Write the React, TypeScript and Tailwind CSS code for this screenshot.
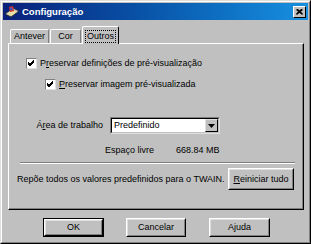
import React from "react";

const font = { fontFamily: '"Liberation Sans", Arial, sans-serif' };

function Check() {
  return (
    <div className="w-[11px] h-[11px] bg-white border border-t-[#808080] border-l-[#808080] border-r-[#dfdfdf] border-b-[#dfdfdf] shrink-0 flex items-center justify-center">
      <svg width="9" height="9" viewBox="0 0 9 9">
        <path d="M1 4 L3 6 L7 2 M1 5 L3 7 L7 3 M1 3 L3 5 L7 1" stroke="#000" strokeWidth="1" fill="none" />
      </svg>
    </div>
  );
}

function Btn({ children, className = "", def = false }: { children: React.ReactNode; className?: string; def?: boolean }) {
  return (
    <div className={`${def ? "border border-black" : ""} ${className}`}>
      <div className="w-full h-full bg-[#c0c0c0] border border-t-white border-l-white border-r-black border-b-black">
        <div className="w-full h-full border border-t-[#dfdfdf] border-l-[#dfdfdf] border-r-[#808080] border-b-[#808080] flex items-center justify-center text-[9px] text-black leading-none whitespace-nowrap">
          {children}
        </div>
      </div>
    </div>
  );
}

export default function App() {
  return (
    <div style={font} className="w-[311px] h-[244px] bg-[#c0c0c0] relative overflow-hidden border border-t-[#dfdfdf] border-l-[#dfdfdf] border-r-black border-b-black">
      <div className="w-full h-full border border-t-white border-l-white border-r-[#808080] border-b-[#808080] px-[1px] pt-[1px]">
        {/* Title bar */}
        <div className="h-[17px] bg-gradient-to-r from-[#0a1f7a] to-[#1890e0] flex items-center pl-[1px] pr-[2px]">
          <svg width="16" height="14" viewBox="0 0 16 14" className="shrink-0">
            <path d="M1 9 L9 3 L15 6 L7 12 Z" fill="#c0c0c0" stroke="#222" strokeWidth="0.8" />
            <path d="M3 9 L9 5 L13 7 L7 11 Z" fill="#e8e0a0" />
            <path d="M5 2 L9 1 L10 6 L6 7 Z" fill="#d03030" />
            <path d="M6 3 L8 2.5 L8.5 5 L6.5 5.5 Z" fill="#3060d0" />
          </svg>
          <span className="ml-[2px] text-white font-bold text-[9.5px] leading-none">Configuração</span>
          <div className="ml-auto w-[13px] h-[12px] bg-[#c0c0c0] border border-t-white border-l-white border-r-black border-b-black flex items-center justify-center">
            <svg width="7" height="6" viewBox="0 0 7 6">
              <path d="M0.5 0.5 L6.5 5.5 M6.5 0.5 L0.5 5.5 M1.5 0.5 L6.5 5 M5.5 0.5 L0.5 5" stroke="#000" strokeWidth="1.2" />
            </svg>
          </div>
        </div>

        {/* Tabs */}
        <div className="mt-[6px] ml-[5px] flex items-end h-[17px] relative z-10">
          <div className="ml-[2px] h-[14px] w-[39px] border-t border-l border-t-white border-l-white border-r border-r-[#808080] rounded-t-[2px] flex items-center justify-center text-[9px] leading-none">Antever</div>
          <div className="ml-[1px] h-[14px] w-[31px] border-t border-l border-t-white border-l-white border-r border-r-[#808080] rounded-t-[2px] flex items-center justify-center text-[9px] leading-none">Cor</div>
          <div className="ml-[1px] h-[18px] w-[37px] -mb-[1px] bg-[#c0c0c0] border-t border-l border-t-white border-l-white border-r border-r-black rounded-t-[2px] flex items-start justify-center pt-[3px] text-[9px] leading-none">
            <span className="border border-dotted border-black px-[1px] py-[1px]">Outros</span>
          </div>
        </div>

        {/* Panel */}
        <div className="ml-[5px] w-[296px] h-[167px] border border-t-white border-l-white border-r-black border-b-black">
          <div className="w-full h-full border-r border-b border-r-[#808080] border-b-[#808080] text-[9px] text-black leading-none whitespace-nowrap">
            <div className="flex items-center pl-[17px] pt-[14px] gap-[3px]">
              <Check />
              <span>P<span className="underline">r</span>eservar definições de pré-visualização</span>
            </div>
            <div className="flex items-center pl-[36px] pt-[10px] gap-[3px]">
              <Check />
              <span><span className="underline">P</span>reservar imagem pré-visualizada</span>
            </div>
            <div className="flex items-center pt-[27px] pl-[24px]">
              <span className="w-[70px] text-right">Á<span className="underline">r</span>ea de trabalho</span>
              <div className="ml-[7px] w-[110px] h-[17px] bg-white border border-t-[#808080] border-l-[#808080] border-r-[#dfdfdf] border-b-[#dfdfdf] flex items-center">
                <div className="flex-1 h-full border border-t-black border-l-black border-r-[#c0c0c0] border-b-[#c0c0c0] flex items-center pl-[2px] pr-0">
                  <span className="flex-1">Predefinido</span>
                  <div className="w-[13px] h-[13px] bg-[#c0c0c0] border border-t-[#dfdfdf] border-l-[#dfdfdf] border-r-black border-b-black flex items-center justify-center">
                    <svg width="7" height="4" viewBox="0 0 7 4"><path d="M0 0 H7 L3.5 4 Z" fill="#000" /></svg>
                  </div>
                </div>
              </div>
            </div>
            <div className="flex items-center pt-[12px] pl-[96px]">
              <span className="w-[71px]">Espaço livre</span>
              <span>668.84 MB</span>
            </div>
            <div className="mt-[7px] ml-[11px] w-[275px] h-[2px] border-t border-t-[#808080] border-b border-b-white" />
            <div className="flex items-center pl-[8px] pt-[4px]">
              <span>Repõe todos os valores predefinidos para o TWAIN.</span>
              <Btn className="ml-auto mr-[8px] w-[66px] h-[22px]"><span><span className="underline">R</span>einiciar tudo</span></Btn>
            </div>
          </div>
        </div>

        {/* Bottom buttons */}
        <div className="flex pt-[8px] pl-[40px]">
          <Btn def className="w-[61px] h-[19px]">OK</Btn>
          <Btn className="ml-[22px] w-[60px] h-[19px]">Cancelar</Btn>
          <Btn className="ml-[23px] w-[61px] h-[19px]">Ajuda</Btn>
        </div>
      </div>
    </div>
  );
}
